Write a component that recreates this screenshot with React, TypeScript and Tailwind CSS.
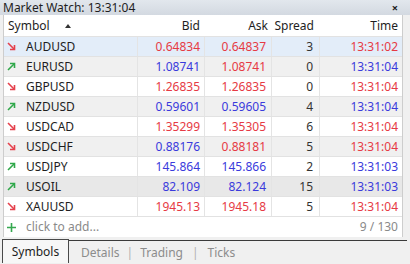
import React from 'react';

type Row = {
  sym: string;
  up: boolean;
  bid: string;
  bidUp: boolean;
  ask: string;
  askUp: boolean;
  spread: string;
  time: string;
  timeUp: boolean;
  bg: string;
};

const rows: Row[] = [
  { sym: 'AUDUSD', up: false, bid: '0.64834', bidUp: false, ask: '0.64837', askUp: false, spread: '3', time: '13:31:02', timeUp: false, bg: 'bg-[#e3edf9]' },
  { sym: 'EURUSD', up: true, bid: '1.08741', bidUp: true, ask: '1.08741', askUp: false, spread: '0', time: '13:31:04', timeUp: true, bg: 'bg-[#f0f0f0]' },
  { sym: 'GBPUSD', up: false, bid: '1.26835', bidUp: false, ask: '1.26835', askUp: false, spread: '0', time: '13:31:04', timeUp: false, bg: 'bg-white' },
  { sym: 'NZDUSD', up: true, bid: '0.59601', bidUp: true, ask: '0.59605', askUp: true, spread: '4', time: '13:31:04', timeUp: true, bg: 'bg-[#f0f0f0]' },
  { sym: 'USDCAD', up: false, bid: '1.35299', bidUp: false, ask: '1.35305', askUp: false, spread: '6', time: '13:31:04', timeUp: false, bg: 'bg-white' },
  { sym: 'USDCHF', up: false, bid: '0.88176', bidUp: true, ask: '0.88181', askUp: false, spread: '5', time: '13:31:04', timeUp: false, bg: 'bg-[#f0f0f0]' },
  { sym: 'USDJPY', up: true, bid: '145.864', bidUp: true, ask: '145.866', askUp: true, spread: '2', time: '13:31:03', timeUp: true, bg: 'bg-white' },
  { sym: 'USOIL', up: true, bid: '82.109', bidUp: true, ask: '82.124', askUp: true, spread: '15', time: '13:31:03', timeUp: true, bg: 'bg-[#e8e8e8]' },
  { sym: 'XAUUSD', up: false, bid: '1945.13', bidUp: false, ask: '1945.18', askUp: false, spread: '5', time: '13:31:04', timeUp: false, bg: 'bg-white' },
];

const tone = (up: boolean) => (up ? 'text-[#3a3adc]' : 'text-[#e63a44]');

function Arrow({ up }: { up: boolean }) {
  return up ? (
    <svg width="9" height="9" viewBox="0 0 9 9" fill="none" stroke="#2fa84a" strokeWidth="1.6">
      <path d="M1 8 L7.5 1.5" />
      <path d="M3 1.5 H7.5 V6" />
    </svg>
  ) : (
    <svg width="9" height="9" viewBox="0 0 9 9" fill="none" stroke="#e5404c" strokeWidth="1.6">
      <path d="M1 1 L7.5 7.5" />
      <path d="M3 7.5 H7.5 V3" />
    </svg>
  );
}

export default function App() {
  return (
    <div className="w-[410px] h-[264px] overflow-hidden bg-[#f0f0f0] text-[12px] text-[#1e1e1e] font-['Segoe_UI','Noto_Sans',sans-serif] leading-none">
      {/* title bar */}
      <div className="h-[15px] flex items-center justify-between pl-[3px] pr-[12px] bg-gradient-to-b from-[#e2e7ed] to-[#d3d9e1]">
        <span>Market Watch: 13:31:04</span>
        <span className="text-[11px] font-bold">×</span>
      </div>

      {/* table */}
      <div className="ml-[3px] w-[400px] bg-white border-l border-r border-[#cdcdcd]">
        <div className="h-[22px] flex items-center border-b border-[#e2e2e2]">
          <div className="w-[134px] pl-[4px] flex items-center gap-[15px]">
            <span>Symbol</span>
            <svg width="6" height="4" viewBox="0 0 6 4">
              <path d="M0 4 L3 0 L6 4 Z" fill="#333" />
            </svg>
          </div>
          <div className="w-[67px] text-right pr-[5px]">Bid</div>
          <div className="w-[67px] text-right pr-[4px]">Ask</div>
          <div className="w-[48px] text-right pr-[6px]">Spread</div>
          <div className="flex-1 text-right pr-[4px]">Time</div>
        </div>

        {rows.map((r) => (
          <div key={r.sym} className={`h-[20px] flex items-stretch border-b border-[#e2e2e2] ${r.bg}`}>
            <div className="w-[134px] flex items-center gap-[10px] pl-[3px] border-r border-[#e4e4e4]">
              <Arrow up={r.up} />
              <span>{r.sym}</span>
            </div>
            <div className={`w-[67px] flex items-center justify-end pr-[4px] border-r border-[#e4e4e4] ${tone(r.bidUp)}`}>{r.bid}</div>
            <div className={`w-[67px] flex items-center justify-end pr-[5px] border-r border-[#e4e4e4] ${tone(r.askUp)}`}>{r.ask}</div>
            <div className="w-[48px] flex items-center justify-end pr-[6px] border-r border-[#e4e4e4] text-[#333]">{r.spread}</div>
            <div className={`flex-1 flex items-center justify-end pr-[4px] ${tone(r.timeUp)}`}>{r.time}</div>
          </div>
        ))}

        <div className="h-[20px] flex items-center justify-between pl-[3px] pr-[4px] text-[#8a8a8a]">
          <div className="flex items-center gap-[10px]">
            <svg width="9" height="9" viewBox="0 0 9 9" stroke="#35a84f" strokeWidth="1.6">
              <path d="M4.5 0 V9 M0 4.5 H9" />
            </svg>
            <span>click to add...</span>
          </div>
          <span>9 / 130</span>
        </div>
      </div>

      {/* tabs */}
      <div className="mt-[3px] flex items-start h-[24px]">
        <div className="ml-[2px] w-[67px] h-[24px] -mt-[1px] border border-b-0 border-[#4a4a4a] bg-[#f7f7f7] flex items-center justify-center">
          Symbols
        </div>
        <div className="flex-1 h-[24px] border-t border-[#3a3a3a] mr-[3px] flex items-center text-[#8c8c8c]">
          <span className="ml-[12px]">Details</span>
          <span className="ml-[7px] text-[#b0b0b0]">|</span>
          <span className="ml-[7px]">Trading</span>
          <span className="ml-[9px] text-[#b0b0b0]">|</span>
          <span className="ml-[9px]">Ticks</span>
        </div>
      </div>
    </div>
  );
}
